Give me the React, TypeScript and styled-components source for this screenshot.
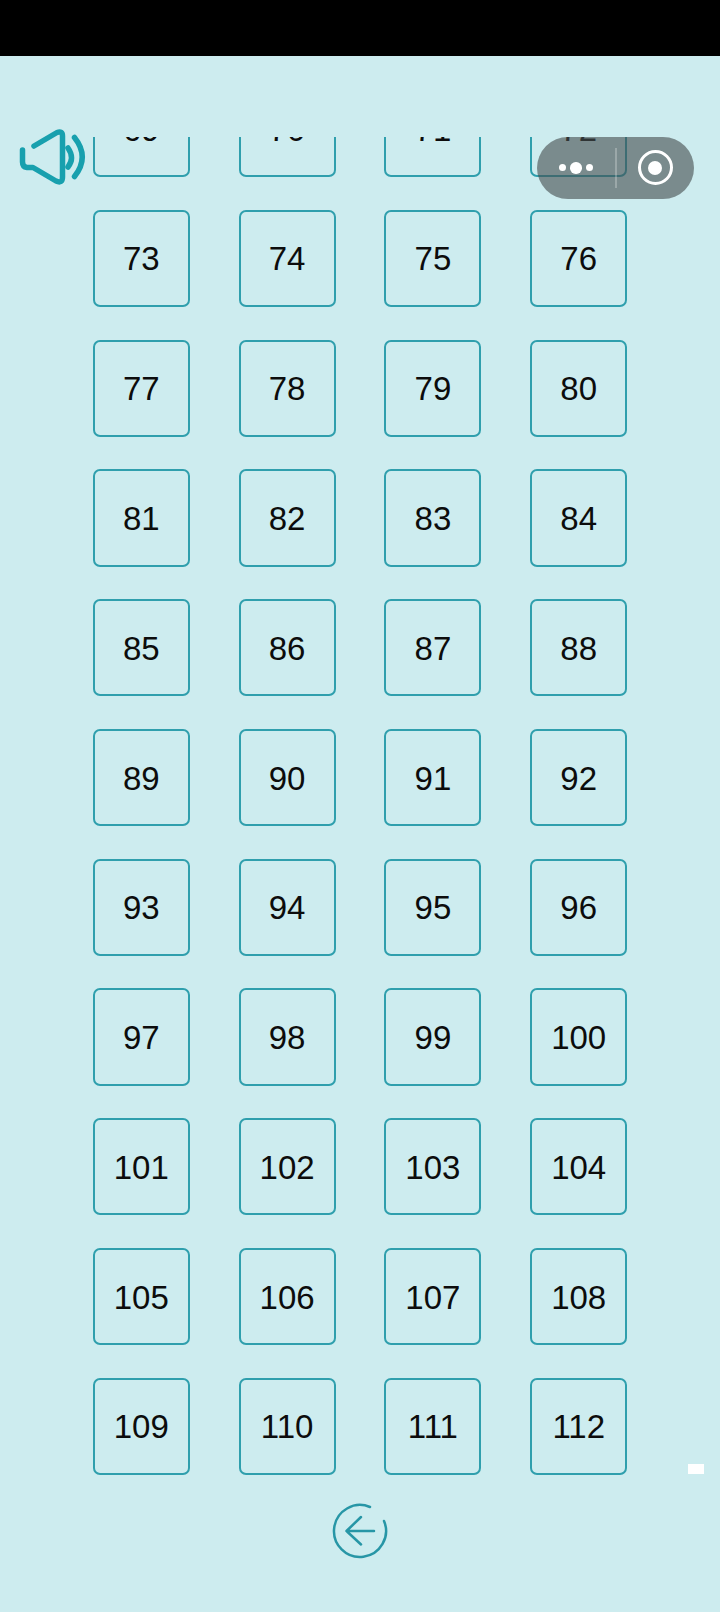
import React from "react";
import styled, { createGlobalStyle } from "styled-components";

const Global = createGlobalStyle`
  html, body { margin: 0; padding: 0; background: #cdecef; }
`;

const Page = styled.div`
  position: relative;
  width: 720px;
  height: 1612px;
  overflow: hidden;
  background: #cdecef;
  font-family: "Liberation Sans", Arial, sans-serif;
`;

const StatusBar = styled.div`
  height: 56px;
  background: #000;
`;

const HeaderSpace = styled.div`
  height: 81px;
`;

const ScrollArea = styled.div`
  height: 1338px;
  overflow: hidden;
`;

const Grid = styled.div`
  margin-top: -57px;
  padding-left: 92.8px;
  display: grid;
  grid-template-columns: repeat(4, 97px);
  grid-auto-rows: 97.2px;
  column-gap: 48.8px;
  row-gap: 32.6px;
`;

const Level = styled.div`
  box-sizing: border-box;
  display: flex;
  align-items: center;
  justify-content: center;
  padding-top: 2px;
  border: 2px solid #2f9fad;
  border-radius: 7px;
  color: #0c0c0c;
  font-size: 33px;
`;

const BackRow = styled.div`
  display: flex;
  justify-content: center;
  margin-top: 28px;
`;

const SoundIcon = styled.svg`
  position: absolute;
  left: 16px;
  top: 126px;
  width: 72px;
  height: 62px;
`;

const Capsule = styled.div`
  position: absolute;
  left: 537px;
  top: 137px;
  width: 157px;
  height: 61.5px;
  border-radius: 31px;
  background: rgba(70, 78, 79, 0.615);
  display: flex;
  align-items: center;
`;

const MoreDots = styled.div`
  width: 78px;
  display: flex;
  align-items: center;
  justify-content: center;
  gap: 4.5px;
`;

const Dot = styled.span<{ $size: number }>`
  width: ${(p) => p.$size}px;
  height: ${(p) => p.$size}px;
  border-radius: 50%;
  background: #fff;
`;

const Divider = styled.span`
  width: 1.5px;
  height: 40px;
  background: rgba(255, 255, 255, 0.25);
`;

const CloseWrap = styled.div`
  flex: 1;
  display: flex;
  justify-content: center;
`;

const RecordRing = styled.div`
  box-sizing: border-box;
  width: 35px;
  height: 35px;
  border: 3.5px solid #fff;
  border-radius: 50%;
  display: flex;
  align-items: center;
  justify-content: center;
`;

const RecordDot = styled.span`
  width: 14px;
  height: 14px;
  border-radius: 50%;
  background: #fff;
`;

const Marker = styled.div`
  position: absolute;
  left: 688px;
  top: 1464px;
  width: 16px;
  height: 10px;
  background: #fff;
`;

const levels = Array.from({ length: 44 }, (_, i) => i + 69);

export default function App() {
  return (
    <Page>
      <Global />
      <StatusBar />
      <HeaderSpace />
      <ScrollArea>
        <Grid>
          {levels.map((n) => (
            <Level key={n}>{n}</Level>
          ))}
        </Grid>
      </ScrollArea>
      <BackRow>
        <svg width="56" height="56" viewBox="332 1503 56 56" fill="none" stroke="#2796a6" strokeWidth="2.5" strokeLinecap="round" strokeLinejoin="round">
          <path d="M370 1507 A26 26 0 1 0 384 1521" />
          <path d="M374 1531 H346.5 M361 1517 L346.5 1531 L361 1544.5" />
        </svg>
      </BackRow>
      <SoundIcon viewBox="16 126 72 62" fill="none" stroke="#18a0ae" strokeLinecap="round" strokeLinejoin="round">
        <path strokeWidth="5.5" d="M34 146 L57 132.5 Q62.5 130.5 62.5 136 V177 Q62.5 184 56 181 L33 167.5 H27 Q22.5 167 22.5 162 V150" />
        <path strokeWidth="5.5" d="M68 148 Q75 158 68 167" />
        <path strokeWidth="5.5" d="M74.5 137.5 Q90 157 74.5 176.5" />
      </SoundIcon>
      <Capsule>
        <MoreDots>
          <Dot $size={7} />
          <Dot $size={11.5} />
          <Dot $size={7} />
        </MoreDots>
        <Divider />
        <CloseWrap>
          <RecordRing>
            <RecordDot />
          </RecordRing>
        </CloseWrap>
      </Capsule>
      <Marker />
    </Page>
  );
}
